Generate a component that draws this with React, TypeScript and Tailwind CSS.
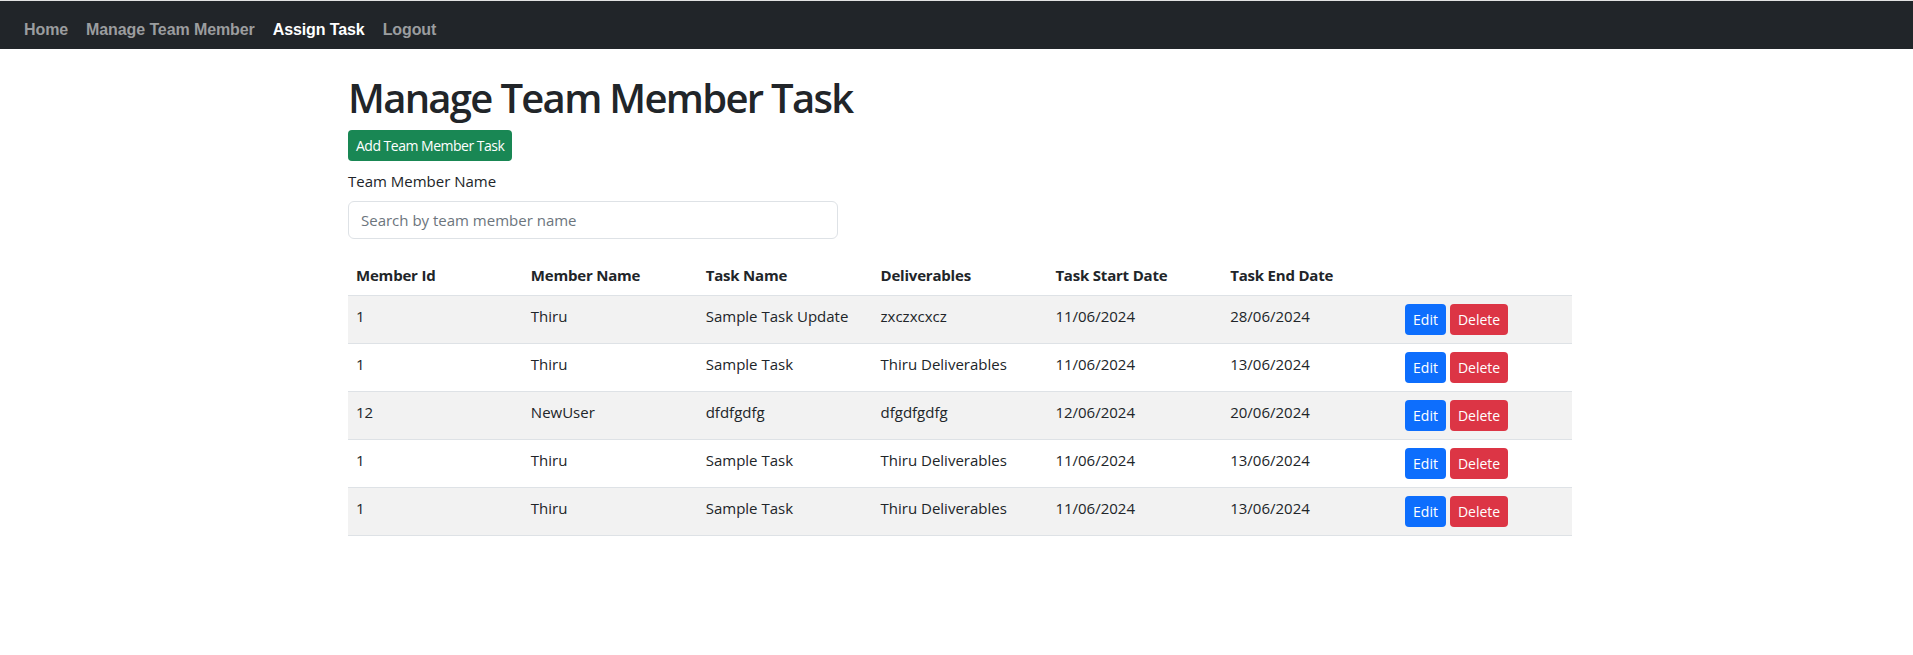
import React from "react";

const rows = [
  { id: "1", name: "Thiru", task: "Sample Task Update", del: "zxczxcxcz", start: "11/06/2024", end: "28/06/2024" },
  { id: "1", name: "Thiru", task: "Sample Task", del: "Thiru Deliverables", start: "11/06/2024", end: "13/06/2024" },
  { id: "12", name: "NewUser", task: "dfdfgdfg", del: "dfgdfgdfg", start: "12/06/2024", end: "20/06/2024" },
  { id: "1", name: "Thiru", task: "Sample Task", del: "Thiru Deliverables", start: "11/06/2024", end: "13/06/2024" },
  { id: "1", name: "Thiru", task: "Sample Task", del: "Thiru Deliverables", start: "11/06/2024", end: "13/06/2024" },
];

export default function App() {
  return (
    <div className="min-h-screen bg-white text-[#212529] font-['Open_Sans','Noto_Sans',sans-serif]">
      <div className="h-px bg-[#e2e2e2]" />
      <nav className="h-[48px] bg-[#212529] pl-[24px] pt-[17px] flex gap-[18px] font-['Liberation_Sans',Arial,sans-serif] font-bold text-[16px] leading-[24px] tracking-[-0.1px]">
        <a className="text-[#9b9d9f]">Home</a>
        <a className="text-[#9b9d9f]">Manage Team Member</a>
        <a className="text-white">Assign Task</a>
        <a className="text-[#9b9d9f]">Logout</a>
      </nav>
      <div className="ml-[348px] w-[1224px]">
        <h1 className="mt-[25px] mb-2 text-[40px] leading-[48px] font-semibold tracking-[-1.7px]">
          Manage Team Member Task
        </h1>
        <button className="h-[31px] px-2 rounded-[4px] bg-[#198754] text-white text-[14px] leading-[21px] tracking-[-0.5px]">
          Add Team Member Task
        </button>
        <div className="mt-2 mb-2 text-[15px] leading-[24px]">Team Member Name</div>
        <input
          className="w-[40%] h-[38px] px-3 border border-[#dee2e6] rounded-[6px] text-[15px] placeholder:text-[#6c757d] outline-none"
          placeholder="Search by team member name"
        />
        <table className="mt-4 w-full table-fixed border-collapse text-[15px] leading-[24px]">
          <thead>
            <tr>
              {["Member Id", "Member Name", "Task Name", "Deliverables", "Task Start Date", "Task End Date", ""].map((h, i) => (
                <th key={i} className="p-2 text-left font-bold border-b border-[#dee2e6] align-top tracking-[-0.2px]">
                  {h}
                </th>
              ))}
            </tr>
          </thead>
          <tbody>
            {rows.map((r, i) => (
              <tr key={i} className={i % 2 === 0 ? "bg-[#f2f2f2]" : "bg-white"}>
                <td className="p-2 align-top border-b border-[#dee2e6]">{r.id}</td>
                <td className="p-2 align-top border-b border-[#dee2e6]">{r.name}</td>
                <td className="p-2 align-top border-b border-[#dee2e6]">{r.task}</td>
                <td className="p-2 align-top border-b border-[#dee2e6]">{r.del}</td>
                <td className="p-2 align-top border-b border-[#dee2e6]">{r.start}</td>
                <td className="p-2 align-top border-b border-[#dee2e6]">{r.end}</td>
                <td className="p-2 align-top border-b border-[#dee2e6]">
                  <div className="flex gap-1">
                    <button className="h-[31px] px-2 rounded-[4px] bg-[#0d6efd] text-white text-[14px]">Edit</button>
                    <button className="h-[31px] px-2 rounded-[4px] bg-[#dc3545] text-white text-[14px]">Delete</button>
                  </div>
                </td>
              </tr>
            ))}
          </tbody>
        </table>
      </div>
    </div>
  );
}
